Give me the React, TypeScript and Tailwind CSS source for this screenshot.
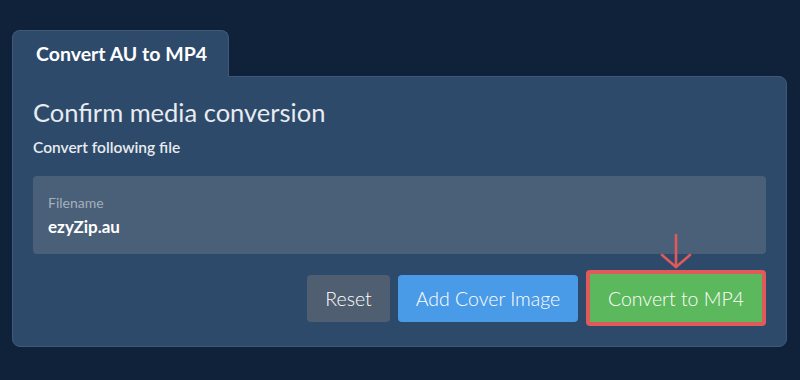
import { ReactNode } from "react";

function DownArrow() {
  return (
    <svg width="32" height="36" viewBox="0 0 32 36" fill="none" className="block">
      <path d="M16 1 L16 33" stroke="#e05a5a" strokeWidth="2.6" strokeLinecap="round" />
      <path d="M2 21 L16 33 L30 21" stroke="#e05a5a" strokeWidth="2.6" strokeLinecap="round" strokeLinejoin="round" />
    </svg>
  );
}

function Btn({ className, children }: { className: string; children: ReactNode }) {
  return (
    <button className={`h-[47px] rounded-[4px] text-[19.5px] font-light text-white ${className}`}>{children}</button>
  );
}

export default function App() {
  return (
    <div className="min-h-screen w-full bg-[#10223a] px-3 pt-[30px] font-['Lato','Liberation_Sans',sans-serif]">
      {/* tab */}
      <div className="relative z-10 -mb-px inline-flex h-[47px] w-[217px] items-center rounded-t-[8px] border border-b-0 border-[#40597a] bg-[#2d4a6b] pl-[23px]">
        <span className="text-[19.5px] font-bold text-white">Convert AU to MP4</span>
      </div>

      {/* panel */}
      <div className="w-[775px] rounded-b-[8px] rounded-tr-[8px] border border-[#40597a] bg-[#2d4a6b] px-5 pt-5 pb-5">
        <h1 className="text-[25.5px] leading-[31px] text-[#e8ebef]">Confirm media conversion</h1>
        <p className="mt-[8px] text-[15.5px] font-semibold text-[#e8ebef]">Convert following file</p>

        <div className="mt-[17px] h-[78px] rounded-[4px] bg-[#4a5f78] px-[15px] pt-[18px]">
          <div className="text-[14px] leading-[17px] text-[#a4afbd]">Filename</div>
          <div className="mt-[6px] text-[17px] font-bold leading-[20px] text-white">ezyZip.au</div>
        </div>

        <div className="mt-[16px] flex items-center justify-end gap-2">
          <Btn className="bg-[#4f5e70] w-[83px]">Reset</Btn>
          <Btn className="bg-[#4a9be7] w-[180px]">Add Cover Image</Btn>
          <div className="relative border-4 border-[#e05a5a] rounded-[4px]">
            <div className="absolute bottom-full left-1/2 mb-[4px] -translate-x-1/2">
              <DownArrow />
            </div>
            <button className="block h-[48px] w-[172px] bg-[#5cb85c] text-[19.5px] font-light text-white">Convert to MP4</button>
          </div>
        </div>
      </div>
    </div>
  );
}
